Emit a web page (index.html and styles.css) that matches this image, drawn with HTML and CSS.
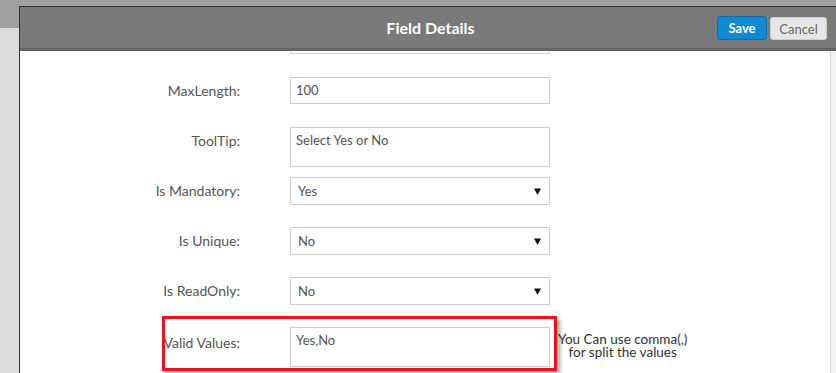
FILE: index.html
```html
<!DOCTYPE html>
<html lang="en">
<head>
<meta charset="utf-8">
<title>Field Details</title>
<link rel="stylesheet" href="styles.css">
</head>
<body>
<div class="page">
  <div class="modal">
    <div class="modal-header">
      <span class="spacer"></span>
      <h1 class="title">Field Details</h1>
      <div class="actions">
        <button class="btn btn-save">Save</button>
        <button class="btn btn-cancel">Cancel</button>
      </div>
    </div>
    <div class="modal-body">
      <div class="content">
        <div class="form">
          <div class="row">
            <div class="label"></div>
            <div class="field"></div>
          </div>
          <div class="row">
            <div class="label">MaxLength:</div>
            <div class="field">100</div>
          </div>
          <div class="row">
            <div class="label">ToolTip:</div>
            <div class="field textarea">Select Yes or No</div>
          </div>
          <div class="row">
            <div class="label">Is Mandatory:</div>
            <div class="field select"><span>Yes</span><svg class="arrow" width="7" height="7" viewBox="0 0 7 7"><polygon points="0,0.5 7,0.5 3.5,7" fill="#111"/></svg></div>
          </div>
          <div class="row">
            <div class="label">Is Unique:</div>
            <div class="field select"><span>No</span><svg class="arrow" width="7" height="7" viewBox="0 0 7 7"><polygon points="0,0.5 7,0.5 3.5,7" fill="#111"/></svg></div>
          </div>
          <div class="row">
            <div class="label">Is ReadOnly:</div>
            <div class="field select"><span>No</span><svg class="arrow" width="7" height="7" viewBox="0 0 7 7"><polygon points="0,0.5 7,0.5 3.5,7" fill="#111"/></svg></div>
          </div>
          <div class="row">
            <div class="label label-valid">Valid Values:</div>
            <div class="field textarea">Yes,No</div>
            <div class="help"><span class="help-line">You Can use comma(,)</span><span class="help-line">for split the values</span></div>
            <div class="highlight"></div>
          </div>
        </div>
      </div>
      <div class="scrollbar"></div>
    </div>
  </div>
</div>
</body>
</html>
```
FILE: styles.css
```css
html, body {
  margin: 0;
  height: 100%;
  overflow: hidden;
}
body {
  background: linear-gradient(#a1a1a1 0, #a1a1a1 28px, #dcdcdc 28px);
  font-family: Lato, "Open Sans", sans-serif;
}
.page {
  padding: 6px 0 0 19px;
}
.modal {
  width: 821px;
  border-top: 1px solid #303030;
  border-left: 1px solid #303030;
  background: #fff;
}
.modal-header {
  height: 41px;
  background: #7a7a7a;
  border-bottom: 3px solid #636363;
  display: grid;
  grid-template-columns: 1fr auto 1fr;
  align-items: center;
  padding: 0 14px;
}
.title {
  margin: 0;
  font-size: 16px;
  font-weight: 700;
  color: #fff;
}
.actions {
  justify-self: end;
  display: flex;
  gap: 3px;
  align-items: center;
  margin-top: 1px;
}
.btn {
  box-sizing: border-box;
  font-family: Lato, "Open Sans", sans-serif;
  font-size: 13px;
  border-radius: 3px;
  padding: 0;
  cursor: pointer;
}
.btn-save {
  width: 50px;
  height: 24px;
  background: #0f89d2;
  border: 1px solid #1b6aa6;
  color: #fff;
  font-weight: 700;
}
.btn-cancel {
  width: 57px;
  height: 23px;
  margin-top: 1px;
  background: #e6e6e6;
  border: 1px solid #cfcfcf;
  color: #666;
}
.modal-body {
  display: flex;
  height: 340px;
}
.content {
  flex: 1;
  overflow: hidden;
}
.scrollbar {
  box-sizing: border-box;
  width: 11px;
  background: #f3f3f3;
  border-left: 1px solid #d8d8d8;
}
.form {
  margin-top: -24px;
  display: flex;
  flex-direction: column;
}
.row {
  position: relative;
  height: 50px;
  display: flex;
  align-items: flex-start;
}
.label {
  width: 220px;
  flex: none;
  text-align: right;
  line-height: 28px;
  font-size: 14px;
  color: #555;
}
.label-valid {
  padding-top: 2px;
}
.field {
  box-sizing: border-box;
  width: 260px;
  flex: none;
  margin-left: 50px;
  height: 27px;
  border: 1px solid #ccc;
  padding: 0 5px;
  font-size: 13px;
  line-height: 25px;
  color: #555;
}
.textarea {
  height: 40px;
}
.select {
  height: 28px;
  display: flex;
  justify-content: space-between;
  align-items: center;
  padding: 0 8px 0 7px;
}
.help {
  margin-left: 8px;
  padding-top: 6px;
  display: flex;
  flex-direction: column;
  align-items: center;
  font-size: 13.5px;
  line-height: 14px;
  color: #333;
}
.help-line {
  display: block;
  height: 13px;
  line-height: 13px;
}
.highlight {
  position: absolute;
  left: 142px;
  top: -11px;
  width: 395px;
  height: 55px;
  box-sizing: border-box;
  border: 3px solid #e8141b;
  box-shadow: 3px 3px 4px rgba(0, 0, 0, 0.35);
  pointer-events: none;
}
```
